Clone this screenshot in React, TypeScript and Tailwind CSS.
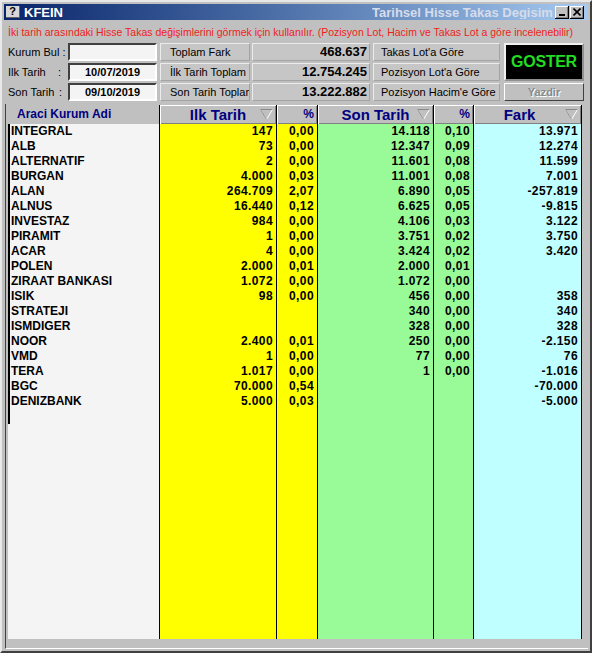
import React from 'react';

type Row = [string, string, string, string, string, string];

const rows: Row[] = [
  ['INTEGRAL', '147', '0,00', '14.118', '0,10', '13.971'],
  ['ALB', '73', '0,00', '12.347', '0,09', '12.274'],
  ['ALTERNATIF', '2', '0,00', '11.601', '0,08', '11.599'],
  ['BURGAN', '4.000', '0,03', '11.001', '0,08', '7.001'],
  ['ALAN', '264.709', '2,07', '6.890', '0,05', '-257.819'],
  ['ALNUS', '16.440', '0,12', '6.625', '0,05', '-9.815'],
  ['INVESTAZ', '984', '0,00', '4.106', '0,03', '3.122'],
  ['PIRAMIT', '1', '0,00', '3.751', '0,02', '3.750'],
  ['ACAR', '4', '0,00', '3.424', '0,02', '3.420'],
  ['POLEN', '2.000', '0,01', '2.000', '0,01', ''],
  ['ZIRAAT BANKASI', '1.072', '0,00', '1.072', '0,00', ''],
  ['ISIK', '98', '0,00', '456', '0,00', '358'],
  ['STRATEJI', '', '', '340', '0,00', '340'],
  ['ISMDIGER', '', '', '328', '0,00', '328'],
  ['NOOR', '2.400', '0,01', '250', '0,00', '-2.150'],
  ['VMD', '1', '0,00', '77', '0,00', '76'],
  ['TERA', '1.017', '0,00', '1', '0,00', '-1.016'],
  ['BGC', '70.000', '0,54', '', '', '-70.000'],
  ['DENIZBANK', '5.000', '0,03', '', '', '-5.000'],
];

const numCols = [
  { idx: 1, cls: 'w-[117px] bg-[#ffff00]' },
  { idx: 2, cls: 'w-[41px] bg-[#ffff00]' },
  { idx: 3, cls: 'w-[116px] bg-[#98fb98]' },
  { idx: 4, cls: 'w-[40px] bg-[#98fb98]' },
  { idx: 5, cls: 'w-[108px] bg-[#c0ffff]' },
];

const bevel = 'shadow-[inset_1px_1px_0_#ffffff,inset_-1px_-1px_0_#808080]';

const SortArrow = () => (
  <svg width="13" height="11" viewBox="0 0 13 11" className="absolute right-[3px] top-[4px]">
    <polygon points="0.5,0.5 12.5,0.5 6.5,10.5" fill="none" stroke="#ffffff" strokeWidth="1" />
    <polyline points="0.5,0.5 6.5,10.5" fill="none" stroke="#8a8a8a" strokeWidth="1" />
    <polyline points="0.5,0.5 12.5,0.5" fill="none" stroke="#8a8a8a" strokeWidth="1" />
  </svg>
);

const TitleButton = ({ kind }: { kind: 'min' | 'close' }) => (
  <div className={`w-[14px] h-[13px] bg-[#c0c0c0] border-r border-b border-black ${bevel} flex items-center justify-center`}>
    {kind === 'min' ? (
      <svg width="8" height="8" viewBox="0 0 8 8">
        <rect x="1" y="6" width="6" height="2" fill="#000" />
      </svg>
    ) : (
      <svg width="8" height="8" viewBox="0 0 8 8">
        <path d="M0.5 0.5 L7.5 7.5 M7.5 0.5 L0.5 7.5" stroke="#000" strokeWidth="1.6" />
      </svg>
    )}
  </div>
);

const FlatBox: React.FC<{ children?: React.ReactNode; className?: string }> = ({ children, className = '' }) => (
  <div
    className={`h-[18px] bg-[#c6c6c6] border border-t-[#ececec] border-l-[#ececec] border-b-[#a4a4a4] border-r-[#a4a4a4] overflow-hidden whitespace-nowrap leading-[16px] ${className}`}
  >
    {children}
  </div>
);

const Input: React.FC<{ value?: string }> = ({ value }) => (
  <div className="h-[18px] w-[89px] bg-[#f4f4f4] border-2 border-t-[#404040] border-l-[#404040] border-b-white border-r-white text-center text-[11px] font-bold leading-[14px]">
    {value}
  </div>
);

export default function App() {
  return (
    <div className="w-[592px] h-[653px] bg-[#c0c0c0] border-2 border-t-[#e8e8e8] border-l-[#e8e8e8] border-r-[#404040] border-b-[#404040] p-[2px] flex flex-col overflow-hidden font-['Liberation_Sans',Arial,sans-serif] text-black">
      {/* title bar */}
      <div className="h-[16px] shrink-0 flex items-center bg-linear-to-r from-[#0a246a] to-[#a6caf0]">
        <div className="ml-[2px] w-[14px] h-[12px] bg-[#d8d8d8] border-r border-b border-[#606060] flex items-center justify-center text-[11px] font-bold leading-none">
          ?
        </div>
        <span className="ml-[4px] text-[13px] font-bold text-white leading-none">KFEIN</span>
        <div className="flex-1" />
        <div className="w-[181px] overflow-hidden whitespace-nowrap text-[13px] font-bold text-[#d6dcea] leading-none">
          Tarihsel Hisse Takas Degisim
        </div>
        <div className="ml-[2px]">
          <TitleButton kind="min" />
        </div>
        <div className="ml-[1px] mr-[4px]">
          <TitleButton kind="close" />
        </div>
      </div>

      {/* info line */}
      <div className="h-[21px] shrink-0 pt-[4px] pl-[4px] text-[10.5px] leading-[16px] text-[#f01c1c] whitespace-nowrap">
        İki tarih arasındaki Hisse Takas değişimlerini görmek için kullanılır. (Pozisyon Lot, Hacim ve Takas Lot a göre incelenebilir)
      </div>

      {/* controls */}
      <div className="mt-[2px] shrink-0 flex pl-[4px] text-[11px]">
        <div className="w-[60px] flex flex-col gap-[2px]">
          <div className="h-[18px] leading-[18px]">Kurum Bul :</div>
          <div className="h-[18px] leading-[18px] flex">
            <span className="w-[50px]">Ilk Tarih</span>:
          </div>
          <div className="h-[18px] leading-[18px] flex">
            <span className="w-[51px]">Son Tarih</span>:
          </div>
        </div>
        <div className="flex flex-col gap-[2px]">
          <Input />
          <Input value="10/07/2019" />
          <Input value="09/10/2019" />
        </div>
        <div className="ml-[3px] w-[90px] flex flex-col gap-[2px]">
          <FlatBox className="pl-[9px]">Toplam Fark</FlatBox>
          <FlatBox className="pl-[9px]">İlk Tarih Toplam</FlatBox>
          <FlatBox className="pl-[9px]">Son Tarih Toplam</FlatBox>
        </div>
        <div className="ml-[2px] w-[118px] flex flex-col gap-[2px] text-[13px] font-bold">
          <FlatBox className="text-right pr-[2px]">468.637</FlatBox>
          <FlatBox className="text-right pr-[2px]">12.754.245</FlatBox>
          <FlatBox className="text-right pr-[2px]">13.222.882</FlatBox>
        </div>
        <div className="ml-[3px] w-[127px] flex flex-col gap-[2px]">
          <FlatBox className="pl-[7px]">Takas Lot'a Göre</FlatBox>
          <FlatBox className="pl-[7px]">Pozisyon Lot'a Göre</FlatBox>
          <FlatBox className="pl-[7px]">Pozisyon Hacim'e Göre</FlatBox>
        </div>
        <div className="ml-[4px] w-[80px] flex flex-col gap-[2px]">
          <div className="h-[38px] bg-black border-2 border-t-[#f0f0f0] border-l-[#f0f0f0] border-b-[#909090] border-r-[#909090] flex items-center justify-center text-[16px] font-bold text-[#22dd22] tracking-[-0.3px]">
            GOSTER
          </div>
          <div className="h-[18px] bg-[#c0c0c0] border border-t-white border-l-white border-b-[#404040] border-r-[#404040] flex items-center justify-center text-[11px] font-bold text-[#8a8a8a] [text-shadow:1px_1px_0_#ffffff]">
            Yazdir
          </div>
        </div>
      </div>

      {/* grid */}
      <div className="mt-[3px] flex-1 min-h-0 flex flex-col ml-[1px] border-l border-l-[#404040] border-b border-b-white pl-[2px] pt-[1px] pb-[9px]">
        {/* header */}
        <div className="h-[19px] shrink-0 flex bg-[#c0c0c0] text-[#000080] font-bold">
          <div className="w-[152px] border-r border-black pl-[9px] text-[12px] leading-[19px]">Araci Kurum Adi</div>
          <div className={`relative w-[117px] border-r border-black ${bevel} text-center text-[15px] leading-[19px]`}>
            Ilk Tarih
            <SortArrow />
          </div>
          <div className={`w-[41px] border-r border-black ${bevel} text-right pr-[3px] text-[12px] leading-[19px]`}>%</div>
          <div className={`relative w-[116px] border-r border-black ${bevel} text-center text-[15px] leading-[19px]`}>
            Son Tarih
            <SortArrow />
          </div>
          <div className={`w-[40px] border-r border-black ${bevel} text-right pr-[3px] text-[12px] leading-[19px]`}>%</div>
          <div className={`relative w-[108px] border-r border-black ${bevel} text-center pr-[16px] text-[15px] leading-[19px]`}>
            Fark
            <SortArrow />
          </div>
        </div>

        {/* body */}
        <div className="flex-1 min-h-0 flex text-[12px] font-bold leading-[15px]">
          <div className="w-[152px] shrink-0 bg-[#f4f4f4] border-r border-black flex flex-col">
            {rows.map((r) => (
              <div key={r[0]} className="h-[15px] border-l-2 border-black pl-[1px] whitespace-nowrap">
                {r[0]}
              </div>
            ))}
            <div className="h-[15px] border-l-2 border-black" />
          </div>
          {numCols.map((c) => (
            <div key={c.idx} className={`${c.cls} shrink-0 border-r border-black flex flex-col`}>
              {rows.map((r) => (
                <div key={r[0]} className="h-[15px] text-right pr-[3px] tracking-[0.4px] whitespace-nowrap">
                  {r[c.idx]}
                </div>
              ))}
            </div>
          ))}
        </div>
      </div>
    </div>
  );
}
